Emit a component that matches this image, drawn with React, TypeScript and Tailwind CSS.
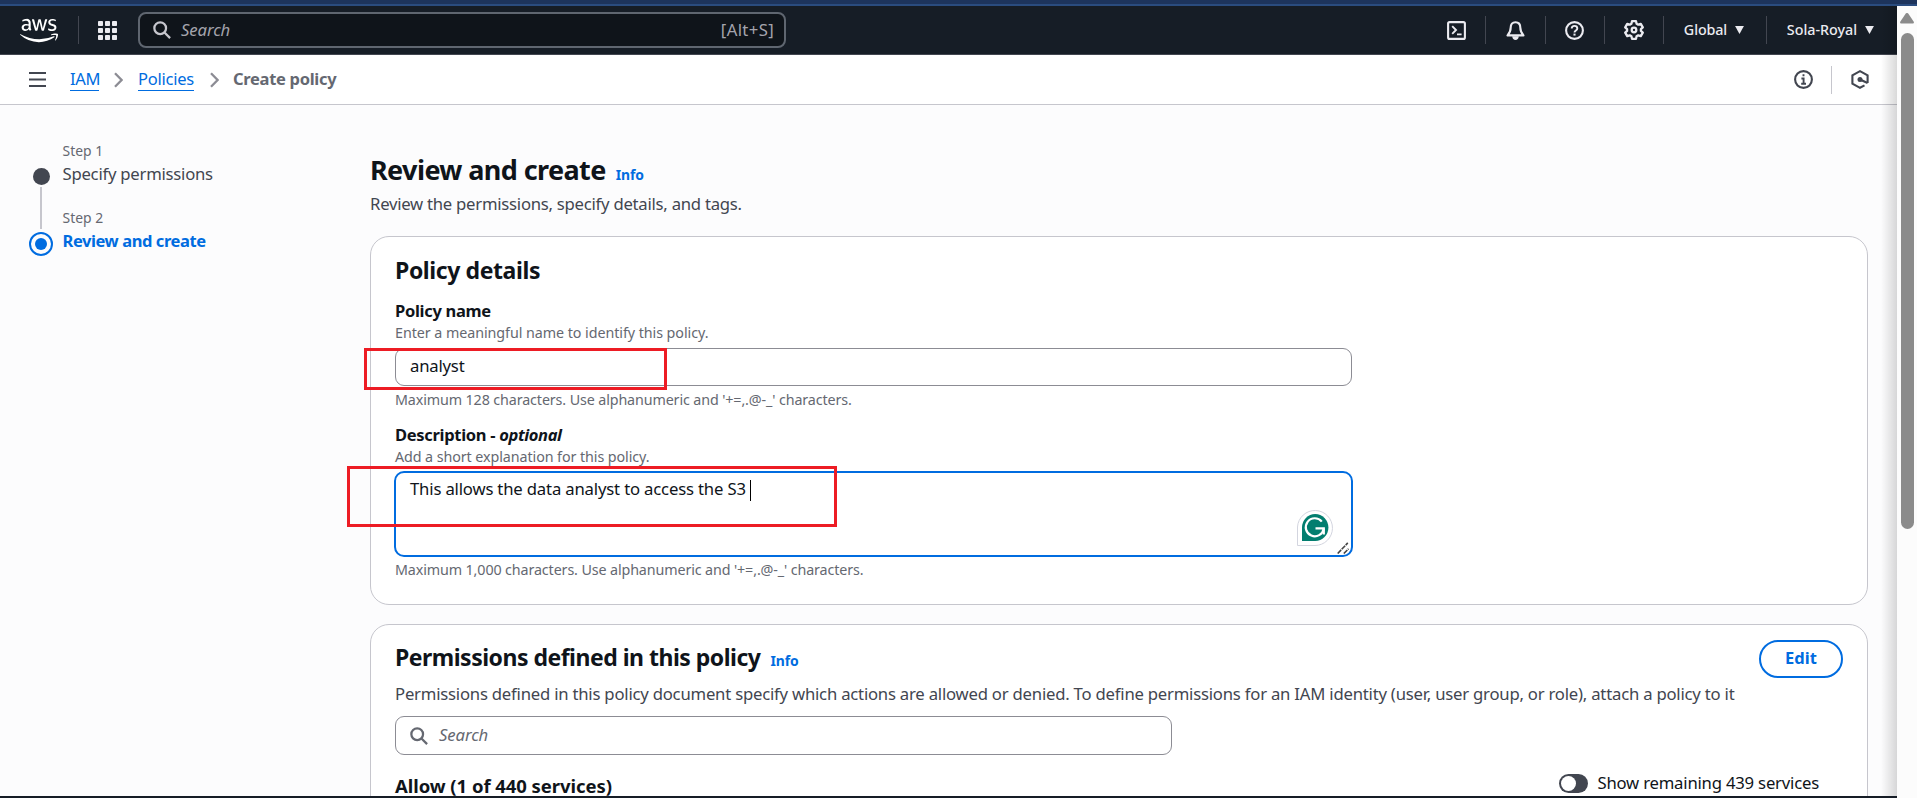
import type { ReactNode } from "react";
import { FaAws } from "react-icons/fa";

function SearchIcon({ className }: { className: string }) {
  return (
    <svg viewBox="0 0 16 16" fill="none" stroke="currentColor" strokeWidth="2" className={className}>
      <circle cx="6.4" cy="6.4" r="5.2" />
      <path d="M10.2 10.2 15.2 15.2" />
    </svg>
  );
}

function Chevron() {
  return (
    <svg viewBox="0 0 9 16" fill="none" stroke="#8c8c94" strokeWidth="2.3" className="h-4 w-[9px]">
      <path d="M1 1.2 7.6 8 1 14.8" />
    </svg>
  );
}

function HeaderCell({ className, children }: { className: string; children: ReactNode }) {
  return <div className={`flex h-7 items-center justify-center border-l border-[#424650] ${className}`}>{children}</div>;
}

function Caret() {
  return (
    <svg viewBox="0 0 10 9" className="h-2 w-[9px]" fill="#ebebf0">
      <path d="M0 0h10L5 9z" />
    </svg>
  );
}

function TopBar() {
  return (
    <header className="flex h-12 items-center bg-[#161d26] text-[#ebebf0]">
      <FaAws className="ml-[20px] h-[31px] w-[38px] shrink-0 text-white" preserveAspectRatio="none" />
      <div className="ml-5 h-7 w-px bg-[#424650]" />
      <svg viewBox="0 0 19 19" fill="#ebebf0" className="ml-[19px] size-[19px]">
        {[0, 7, 14].flatMap((y) => [0, 7, 14].map((x) => <rect key={`${x}-${y}`} x={x} y={y} width="5" height="5" rx="0.8" />))}
      </svg>
      <div className="ml-[21px] flex h-9 w-[648px] items-center rounded-lg border-2 border-[#5f6670] bg-[#0f141a] pr-[10px] pl-[13px]">
        <SearchIcon className="size-[18px] text-[#c6c6cd]" />
        <span className="ml-[10px] text-[16.7px] tracking-[-0.1px] text-[#a4a4ad] italic">Search</span>
        <span className="ml-auto text-[16.7px] tracking-[0.35px] text-[#a4a4ad]">[Alt+S]</span>
      </div>
      <div className="ml-auto flex items-center">
        <svg viewBox="0 0 19 19" fill="none" stroke="currentColor" strokeWidth="2.1" className="mr-[19px] size-[19px]">
          <rect x="1.1" y="1.1" width="16.8" height="16.8" rx="1.5" />
          <path d="M5.2 5.2 9 9l-3.8 3.8M10 13.4h4.6" strokeWidth="1.9" />
        </svg>
        <HeaderCell className="w-[60px]">
          <svg viewBox="0 0 19 19" fill="none" stroke="currentColor" strokeWidth="2.1" strokeLinejoin="round" className="size-[19px]">
            <path d="M9.5 1.2C6.3 1.2 4.7 3.6 4.7 6.5c0 3.3-.8 5.3-3.2 7.9h16c-2.4-2.600-3.200-4.600-3.200-7.900 0-2.900-1.600-5.300-4.800-5.300Z" />
            <path d="M6.2 15.2h6.600c-.2 2.600-1.500 3.800-3.300 3.800s-3.100-1.200-3.300-3.800Z" fill="currentColor" stroke="none" />
          </svg>
        </HeaderCell>
        <HeaderCell className="w-[59px] pr-[2px]">
          <svg viewBox="0 0 19 19" fill="none" stroke="currentColor" strokeWidth="2.1" className="size-[19px]">
            <circle cx="9.5" cy="9.5" r="8.4" />
            <path d="M6.7 7.6c0-1.600 1.200-2.700 2.800-2.700s2.800 1 2.800 2.500c0 2-2.800 2-2.800 4" strokeWidth="1.9" />
            <path d="M9.5 12.600v2" />
          </svg>
        </HeaderCell>
        <HeaderCell className="w-[59px]">
          <svg viewBox="0 0 20 20" fill="none" stroke="currentColor" strokeWidth="2.3" strokeLinejoin="round" className="size-[20px]">
            <path d="M8 1.2h4l.6 2.5 1.7 1 2.5-.8 2 3.4-1.9 1.800v1.800l1.900 1.800-2 3.400-2.500-.8-1.700 1-.6 2.500H8l-.6-2.500-1.700-1-2.500.8-2-3.400 1.900-1.800V9.100L1.200 7.300l2-3.400 2.500.8 1.700-1Z" />
            <circle cx="10" cy="10" r="2.3" />
          </svg>
        </HeaderCell>
        <HeaderCell className="w-[103px] gap-[8px] pr-[2px]">
          <span className="text-[14.3px] font-medium tracking-[-0.1px]">Global</span>
          <Caret />
        </HeaderCell>
        <HeaderCell className="w-[131px] gap-[8px] pr-[3px]">
          <span className="text-[14.3px] font-medium">Sola-Royal</span>
          <Caret />
        </HeaderCell>
      </div>
    </header>
  );
}

function Breadcrumbs() {
  return (
    <div className="flex h-[50px] shrink-0 items-center border-b border-[#c6c6cd] bg-white text-[16.5px] tracking-[-0.35px]">
      <svg viewBox="0 0 17 15" fill="#424650" className="ml-[29px] h-[15px] w-[17px]">
        <path d="M0 0h17v2H0zM0 6.5h17v2H0zM0 13h17v2H0z" />
      </svg>
      <nav className="ml-6 flex items-center">
        <a className="h-[22px] w-[29px] border-b border-[#006ce0] leading-[20px] text-[#006ce0]">IAM</a>
        <span className="ml-[15px]"><Chevron /></span>
        <a className="ml-[15px] h-[22px] w-[56px] border-b border-[#006ce0] leading-[20px] tracking-[-0.25px] text-[#006ce0]">Policies</a>
        <span className="ml-4"><Chevron /></span>
        <span className="ml-[14px] h-[22px] leading-[20px] font-bold tracking-[-0.3px] text-[#656871]">Create policy</span>
      </nav>
      <svg viewBox="0 0 19 19" fill="none" stroke="#424650" strokeWidth="2.1" className="ml-auto size-[19px]">
        <circle cx="9.5" cy="9.5" r="8.4" />
        <path d="M9.5 4.300v2M7.400 8.500h2.200v5M7.200 13.700h4.800" strokeWidth="1.9" />
      </svg>
      <div className="mr-[19px] ml-[18px] h-7 w-px bg-[#c6c6cd]" />
      <svg viewBox="0 0 18 19" fill="none" stroke="#424650" strokeWidth="2.1" className="mr-[28px] h-[19px] w-[18px]">
        <path d="M16.6 13V5.300L9 1.200 1.400 5.300v8.400L9 17.800l4.500-2.400" />
        <circle cx="9" cy="9.5" r="2.5" fill="#424650" stroke="none" />
        <path d="m9 9.5 7.600 3.500" strokeWidth="2.3" />
      </svg>
    </div>
  );
}

function Steps() {
  return (
    <aside className="ml-[29px] flex w-[341px] shrink-0 pt-[35px]">
      <div className="flex w-6 flex-col items-center pt-[28px]">
        <div className="size-[17px] rounded-full bg-[#424650]" />
        <div className="mt-[2px] h-[42px] w-[2px] bg-[#c6c6cd]" />
        <div className="mt-[3px] flex size-6 items-center justify-center rounded-full border-2 border-[#006ce0]">
          <div className="size-3 rounded-full bg-[#006ce0]" />
        </div>
      </div>
      <div className="ml-[9.5px] flex flex-col">
        <span className="text-[13.9px] leading-[21px] text-[#656871]">Step 1</span>
        <span className="text-[16.7px] leading-[26px] tracking-[-0.24px] text-[#424650]">Specify permissions</span>
        <span className="mt-[20px] text-[13.9px] leading-[21px] text-[#656871]">Step 2</span>
        <span className="text-[16.5px] leading-[25px] font-bold tracking-[-0.42px] text-[#006ce0]">Review and create</span>
      </div>
    </aside>
  );
}

function Hint({ className = "", children }: { className?: string; children: ReactNode }) {
  return <p className={`text-[14.3px] leading-[21px] text-[#656871] ${className}`}>{children}</p>;
}

function PolicyDetails() {
  return (
    <section className="mt-5 h-[369px] shrink-0 rounded-[19px] border border-[#c6c6cd] bg-white px-6 pt-[17px]">
      <h2 className="text-[23px] leading-[32px] font-bold tracking-[-0.4px]">Policy details</h2>
      <div className="relative mt-[12px] w-[957px]">
        <p className="text-[16.5px] leading-[25px] font-bold tracking-[-0.3px]">Policy name</p>
        <Hint className="-mt-px tracking-[-0.06px]">Enter a meaningful name to identify this policy.</Hint>
        <div className="mt-[5px] h-[38px] rounded-[9px] border border-[#8c8c94] pt-[4px] pl-[14px] text-[16.7px] leading-[25px] tracking-[-0.2px]">
          analyst
        </div>
        <div className="absolute top-[50px] left-[-31px] h-[42px] w-[303px] border-3 border-[#ed1c24]" />
        <Hint className="mt-[3px] tracking-[-0.12px]">Maximum 128 characters. Use alphanumeric and '+=,.@-_' characters.</Hint>
      </div>
      <div className="relative mt-[12px] w-[957px]">
        <p className="text-[16.5px] leading-[25px] font-bold tracking-[-0.3px]">
          Description - <i className="tracking-[-0.4px]">optional</i>
        </p>
        <Hint className="-mt-px tracking-[-0.08px]">Add a short explanation for this policy.</Hint>
        <div className="relative mt-[4px] -mr-px -ml-px flex h-[86px] items-start rounded-[10px] border-2 border-[#006ce0] pt-[3px] pl-[14px]">
          <span className="text-[16.7px] leading-[25px] tracking-[-0.17px]">This allows the data analyst to access the S3</span>
          <span className="mt-[4px] ml-[4px] h-[21px] w-px bg-black" />
          <svg viewBox="0 0 36 37" className="absolute right-[18px] bottom-[9px] h-[37px] w-[36px]">
            <path d="M.5 36.5V18a17.5 17.5 0 1 1 17.5 18.5Z" fill="#fff" stroke="#d3d5df" />
            <path d="M5 32V18.5A13.2 13.5 0 1 1 18.2 32Z" fill="#027e6f" />
            <path d="M24.8 12.6a9 9 0 1 0 1.9 7" fill="none" stroke="#fff" strokeWidth="2.2" />
            <path d="M18.5 19.4h8.300v6" fill="none" stroke="#fff" strokeWidth="2.2" />
          </svg>
          <svg viewBox="0 0 12 12" className="absolute right-[2px] bottom-px size-3" stroke="#444" strokeWidth="1.6" fill="none">
            <path d="M.7 11.5 10.8.9M6.8 11.5l4.7-4.7" strokeDasharray="5 .8" />
          </svg>
        </div>
        <div className="absolute top-[44px] left-[-48px] h-[61px] w-[490px] border-3 border-[#ed1c24]" />
        <Hint className="mt-[2px] tracking-[-0.12px]">Maximum 1,000 characters. Use alphanumeric and '+=,.@-_' characters.</Hint>
      </div>
    </section>
  );
}

function Permissions() {
  return (
    <section className="mt-[19px] h-[300px] shrink-0 rounded-[19px] border border-[#c6c6cd] bg-white px-6">
      <div className="flex h-[53px] items-start justify-between">
        <h2 className="mt-[17px] flex h-[31px] items-baseline text-[23px] leading-[31px] font-bold tracking-[-0.5px]">
          Permissions defined in this policy
          <span className="ml-[10px] text-[13.9px] leading-none tracking-[-0.1px] text-[#006ce0]">Info</span>
        </h2>
        <button className="mt-[15px] h-[38px] w-[84px] rounded-full border-2 border-[#006ce0] pb-[2px] text-[16.5px] leading-none font-bold text-[#006ce0]">
          Edit
        </button>
      </div>
      <p className="mt-[3px] text-[16.7px] leading-[25px] tracking-[-0.213px] whitespace-nowrap text-[#424650]">
        Permissions defined in this policy document specify which actions are allowed or denied. To define permissions for an IAM
        identity (user, user group, or role), attach a policy to it
      </p>
      <div className="mt-[10px] flex h-[39px] w-[777px] items-center rounded-[9px] border border-[#8c8c94] pl-[14px] text-[#656871]">
        <SearchIcon className="size-[18px]" />
        <span className="ml-[11px] pb-px text-[16.7px] tracking-[-0.1px] italic">Search</span>
      </div>
      <div className="mt-[18px] flex items-start justify-between">
        <span className="text-[18.5px] leading-[25px] font-bold tracking-[-0.05px]">Allow (1 of 440 services)</span>
        <div className="mr-[24px] flex h-[20px] items-center">
          <div className="flex h-[19px] w-[29px] items-center rounded-full bg-[#424650] pl-[2px]">
            <div className="size-[15px] rounded-full bg-white" />
          </div>
          <span className="ml-[9px] text-[16.7px] leading-[20px] tracking-[-0.2px]">Show remaining 439 services</span>
        </div>
      </div>
    </section>
  );
}

export default function App() {
  return (
    <div className="relative flex h-[798px] w-[1917px] flex-col overflow-hidden bg-[#fcfcfd] font-['Noto_Sans',sans-serif] text-[#0f141a]">
      <div className="h-[6px] shrink-0 border-b-2 border-[#2a4c7f] bg-[#1d345c]" />
      <div className="flex min-h-0 flex-1">
        <div className="relative flex w-[1897px] flex-col overflow-hidden">
          <div className="shrink-0 border-b border-[#424650]">
            <TopBar />
          </div>
          <Breadcrumbs />
          <div className="flex min-h-0 flex-1">
            <Steps />
            <main className="flex w-[1498px] flex-col pt-[47px]">
              <h1 className="flex h-[35px] shrink-0 items-baseline text-[27px] leading-[35px] font-bold tracking-[-0.6px]">
                Review and create
                <span className="ml-[10px] text-[13.9px] leading-none tracking-[-0.1px] text-[#006ce0]">Info</span>
              </h1>
              <p className="mt-1 text-[16.7px] leading-[25px] tracking-[-0.25px] text-[#424650]">
                Review the permissions, specify details, and tags.
              </p>
              <PolicyDetails />
              <Permissions />
            </main>
          </div>
          <div className="pointer-events-none absolute inset-y-0 right-0 w-4 bg-linear-to-r from-black/0 to-black/15" />
          <div className="absolute inset-x-0 bottom-0 h-[2px] bg-[#161d26]" />
        </div>
        <div className="flex w-5 flex-col items-center bg-[#fcfcfc] pt-[7px]">
          <svg viewBox="0 0 14 11" className="h-[11px] w-[14px]" fill="#8b8b8b">
            <path d="M5.6.8a1.800 1.800 0 0 1 2.800 0l5.200 7.800c.7 1.100.2 2-1.100 2h-11C.2 10.600-.3 9.700.4 8.600Z" />
          </svg>
          <div className="mt-[9px] h-[496px] w-[13px] rounded-full bg-[#8b8b8b]" />
        </div>
      </div>
    </div>
  );
}
